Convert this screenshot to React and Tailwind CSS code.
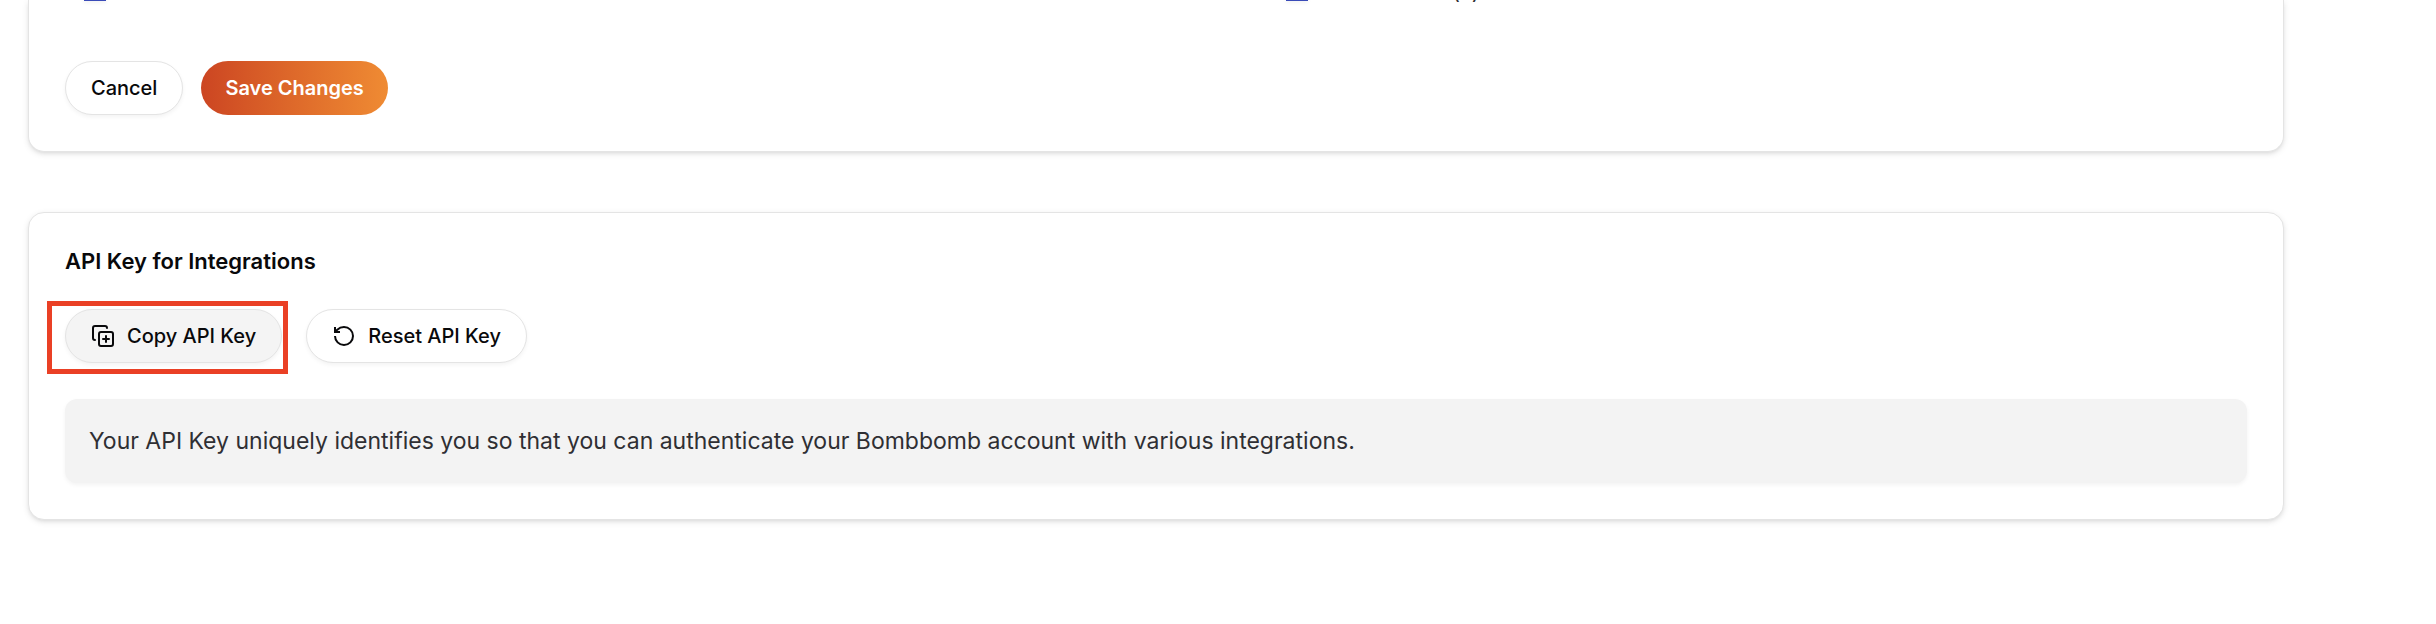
import React from "react";
import { RotateCcw } from "lucide-react";
import { clsx } from "clsx";

const MESSAGE =
  "Your API Key uniquely identifies you so that you can authenticate your Bombbomb account with various integrations.";

const CopyPlusIcon = () => (
  <svg
    viewBox="0 0 24 24"
    className="size-6 shrink-0"
    fill="none"
    stroke="currentColor"
    strokeWidth="2"
    strokeLinecap="round"
    strokeLinejoin="round"
    aria-hidden="true"
  >
    <path d="M4 16c-1.1 0-2-.9-2-2V4c0-1.1.9-2 2-2h10c1.1 0 2 .9 2 2" />
    <rect x="8" y="8" width="14" height="14" rx="2" />
    <path d="M15 12v6M12 15h6" />
  </svg>
);

const Card = ({ className, children }) => (
  <section
    className={clsx(
      "flex flex-col border border-[#e4e4e4] bg-white px-9 pb-9 shadow-[0_2px_6px_rgba(0,0,0,0.1),0_2px_4px_-2px_rgba(0,0,0,0.1)]",
      className
    )}
  >
    {children}
  </section>
);

const OutlineButton = ({ className, children }) => (
  <button
    type="button"
    className={clsx(
      "flex h-[54px] items-center gap-3 rounded-full border border-[#e4e4e4] px-[25px] text-xl font-medium shadow-[0_2px_4px_rgba(0,0,0,0.05)]",
      className
    )}
  >
    {children}
  </button>
);

const Preference = ({ label, children }) => (
  <label className="flex items-end px-[19px]">
    <input
      type="checkbox"
      defaultChecked
      aria-label={label}
      className="size-[22px] appearance-none bg-[#3a4bb8] shadow-[0_2px_4px_rgba(0,0,0,0.05)]"
    />
    {children}
  </label>
);

const App = () => {
  return (
    <main className="flex flex-col gap-[60px] overflow-hidden bg-white pr-[152px] pb-[104px] pl-7 font-['Inter',sans-serif] text-[#09090b]">
      <Card className="rounded-b-2xl border-t-0">
        {/* Tail end of the preferences list */}
        <div className="-mt-[21px] mb-[60px] grid h-[22px] grid-cols-2 gap-[222px]">
          <Preference label="First preference" />
          <Preference label="Second preference">
            <span className="pl-36 text-[22px] leading-5 text-[#2f2f33]">(s)</span>
          </Preference>
        </div>
        <div className="flex gap-[18px]">
          <OutlineButton className="bg-white">Cancel</OutlineButton>
          <button
            type="submit"
            className="h-[54px] rounded-full bg-linear-to-r from-[#cc4522] to-[#ef8b33] px-6 text-xl font-semibold text-white"
          >
            Save Changes
          </button>
        </div>
      </Card>

      <Card className="gap-9 rounded-2xl pt-9">
        <h2 className="text-[22px] leading-6 font-semibold">API Key for Integrations</h2>
        <div className="flex gap-6">
          <div className="relative">
            <OutlineButton className="bg-[#f4f4f4]">
              <CopyPlusIcon />
              Copy API Key
            </OutlineButton>
            {/* Highlight frame */}
            <div className="pointer-events-none absolute -top-2 -right-1.5 -bottom-[11px] -left-[18px] border-5 border-[#ea4025]" />
          </div>
          <OutlineButton className="bg-white">
            <RotateCcw className="size-6 [stroke-linecap:butt] [stroke-linejoin:miter]" />
            Reset API Key
          </OutlineButton>
        </div>
        <p className="rounded-xl bg-[#f3f3f3] p-6 text-[23px] leading-9 text-[#2f2f33] shadow-[0_2px_4px_rgba(0,0,0,0.05)]">
          {MESSAGE}
        </p>
      </Card>
    </main>
  );
};

export default App;
